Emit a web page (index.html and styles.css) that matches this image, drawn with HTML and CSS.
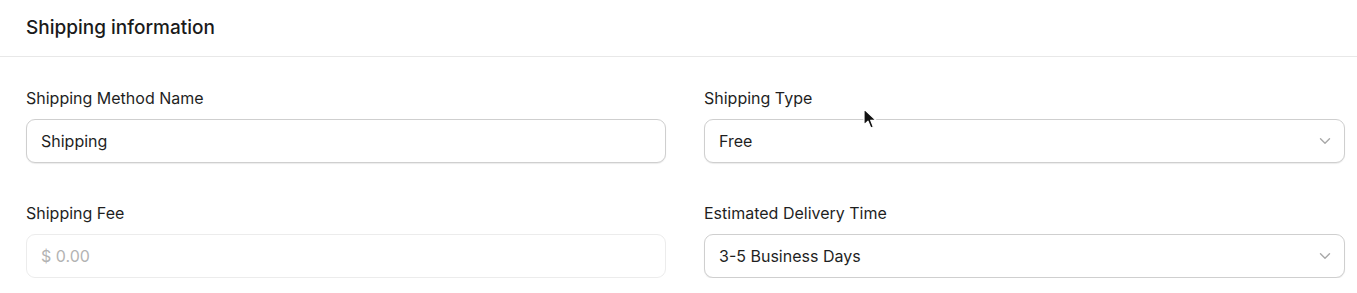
FILE: index.html
```html
<!DOCTYPE html>
<html lang="en">
<head>
    <meta charset="UTF-8">
    <title>Shipping information</title>
    <link rel="stylesheet" href="styles.css">
</head>
<body>
<div class="panel">
    <div class="panel-head">Shipping information</div>
    <form class="panel-body">
        <div class="field">
            <label>Shipping Method Name</label>
            <input class="box" type="text" value="Shipping">
        </div>
        <div class="field field-cursor">
            <label>Shipping Type</label>
            <div class="box select">
                <span>Free</span>
                <svg class="chev" width="12" height="8" viewBox="0 0 12 8"><path d="M1.5 1.8 6 6.2 10.5 1.8" fill="none" stroke="#a8a8a8" stroke-width="1.4" stroke-linecap="round" stroke-linejoin="round"/></svg>
            </div>
            <!-- mouse pointer in the shot -->
            <svg class="pointer" width="14" height="22" viewBox="0 0 14 22"><path d="M1 1 1 17 5 13.2 7.8 20 10.4 18.9 7.7 12.3 13 12.3Z" fill="#111" stroke="#fff" stroke-width="1.2" stroke-linejoin="round"/></svg>
        </div>
        <div class="field">
            <label>Shipping Fee</label>
            <input class="box box-off" type="text" placeholder="$ 0.00" disabled>
        </div>
        <div class="field">
            <label>Estimated Delivery Time</label>
            <div class="box select">
                <span>3-5 Business Days</span>
                <svg class="chev" width="12" height="8" viewBox="0 0 12 8"><path d="M1.5 1.8 6 6.2 10.5 1.8" fill="none" stroke="#a8a8a8" stroke-width="1.4" stroke-linecap="round" stroke-linejoin="round"/></svg>
            </div>
        </div>
    </form>
</div>
</body>
</html>
```

FILE: styles.css
```css
body {
    margin: 0;
    background: #fff;
    font-family: "Inter", "Liberation Sans", sans-serif;
    color: #1a1a1a;
}

.panel-head {
    height: 56px;
    line-height: 56px;
    padding-left: 26px;
    font-size: 19px;
    font-weight: 500;
    border-bottom: 1px solid #e8e8e8;
}

.panel-body {
    display: grid;
    grid-template-columns: 640px 641px;
    column-gap: 38px;
    row-gap: 39px;
    padding: 30px 12px 0 26px;
    margin: 0;
}

.field {
    display: flex;
    flex-direction: column;
    gap: 10px;
}

.field-cursor {
    position: relative;
}

.field label {
    font-size: 16px;
    line-height: 22px;
    color: #1f1f1f;
}

.box {
    box-sizing: border-box;
    height: 44px;
    width: 100%;
    border: 1px solid #cfcfcf;
    border-radius: 9px;
    box-shadow: 0 1px 1px rgba(0, 0, 0, 0.08);
    padding: 0 14px;
    font-family: inherit;
    font-size: 16px;
    color: #1f1f1f;
    background: #fff;
    outline: none;
}

.box-off {
    border-color: #ececec;
    box-shadow: none;
}

.box-off::placeholder {
    color: #b3b3b3;
}

.select {
    display: flex;
    align-items: center;
    justify-content: space-between;
}

.chev {
    margin-right: -1px;
}

.pointer {
    position: absolute;
    left: 159px;
    top: 21px;
}
```
